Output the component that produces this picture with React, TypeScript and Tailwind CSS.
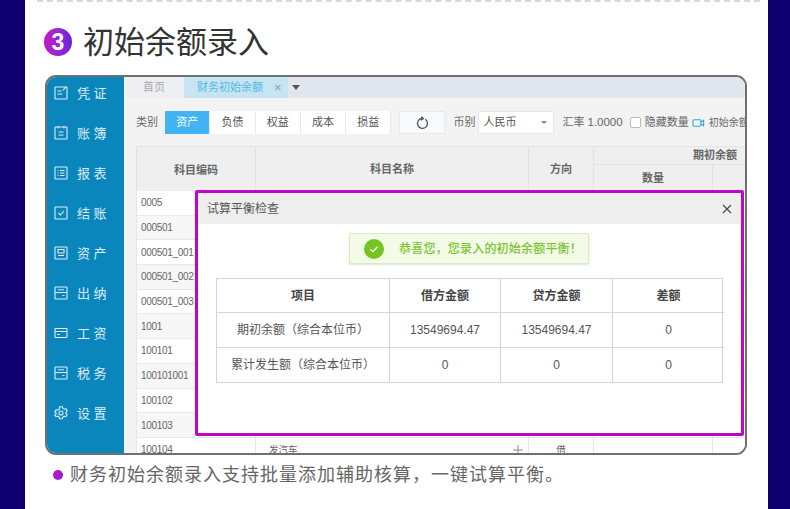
import type { ReactNode } from 'react'

const cjk = "font-['Liberation_Sans','Noto_Sans_CJK_SC',sans-serif]"

function NavIcon({ kind }: { kind: string }) {
  return (
    <svg width="14" height="14" viewBox="0 0 14 14" fill="none" stroke="currentColor" strokeWidth="1.1" className="shrink-0">
      {kind === 'gear' ? (
        <>
          <path d="M5.6 1h2.8l.4 1.7 1.4.8 1.7-.5 1.3 2.3-1.3 1.2v1l1.3 1.2-1.3 2.3-1.7-.5-1.4.8-.4 1.7H5.6l-.4-1.7-1.4-.8-1.7.5L.8 9.500l1.3-1.200v-1L.8 6.300l1.300-2.300 1.700.5 1.400-.8z" transform="translate(0 -.3)" />
          <circle cx="7" cy="7" r="2" />
        </>
      ) : (
        <rect x="1" y={kind === 'card' ? 2.5 : 1} width="12" height={kind === 'card' ? 9 : 12} rx="0.5" />
      )}
      {kind === 'edit' && <path d="M3.500 5h4M3.500 8h5M9 4.500l3-4" />}
      {kind === 'book' && <path d="M4 0v2.500M10 0v2.500M4.500 6h5M4.500 9h5" />}
      {kind === 'list' && <path d="M3.500 4.500h1M6 4.500h4.500M3.500 7h1M6 7h4.500M3.500 9.500h1M6 9.500h4.500" />}
      {kind === 'check' && <path d="M4.500 7l2 2 3.500-4" />}
      {kind === 'asset' && <path d="M4 3.500h6v3.500H4zM4 9.500h6" />}
      {kind === 'cash' && <path d="M1 6.500h12M4 3.800h6M8.500 9.500h2" />}
      {kind === 'card' && <path d="M1 5.500h12M3 8.500h3" />}
    </svg>
  )
}

const navItems = [
  ['edit', '凭 证'],
  ['book', '账 簿'],
  ['list', '报 表'],
  ['check', '结 账'],
  ['asset', '资 产'],
  ['cash', '出 纳'],
  ['card', '工 资'],
  ['cash', '税 务'],
  ['gear', '设 置'],
]

const codes = ['0005', '000501', '000501_001', '000501_002', '000501_003', '1001', '100101', '100101001', '100102', '100103', '100104']

function Seg({ children, active }: { children: ReactNode; active?: boolean }) {
  return (
    <div className={`flex h-[23px] w-[45.300px] shrink-0 items-center justify-center border-r border-[#e8e8e8] text-[11px] ${active ? 'bg-[#41b4f5] text-white' : 'bg-white text-[#555]'}`}>
      {children}
    </div>
  )
}

function Sidebar() {
  return (
    <div className="flex w-[77px] shrink-0 flex-col bg-[#0a86bd] pl-[7px] text-[#dcedf5]">
      {navItems.map(([icon, label], i) => (
        <div key={label} className={`flex h-[40px] shrink-0 items-center gap-[9px] ${i === 0 ? '-mt-[4px]' : ''}`}>
          <NavIcon kind={icon} />
          <span className="text-[13px] leading-none">{label}</span>
        </div>
      ))}
    </div>
  )
}

function Tabs() {
  return (
    <div className="flex h-[21px] bg-[#e2e6ef] text-[11px]">
      <div className="flex w-[60px] items-center justify-center bg-[#edeff3] text-[#aaa]">首页</div>
      <div className="flex w-[104px] items-center bg-[#c6e4f2] pl-[13px] text-[#52b8e8]">
        财务初始余额
        <span className="ml-[11px] text-[13px] leading-none text-[#999]">×</span>
      </div>
      <div className="ml-[4px] mt-[8px] h-0 w-0 border-x-[4px] border-t-[5px] border-x-transparent border-t-[#555]" />
    </div>
  )
}

function Toolbar() {
  return (
    <div className="flex h-[48px] items-center overflow-hidden whitespace-nowrap bg-[#f3f3f3] pl-[12px] pt-[1px] text-[11px] text-[#666]">
      <span className="mr-[7px] shrink-0">类别</span>
      <Seg active>资产</Seg>
      <Seg>负债</Seg>
      <Seg>权益</Seg>
      <Seg>成本</Seg>
      <Seg>损益</Seg>
      <div className="ml-[8px] flex h-[23px] w-[46px] shrink-0 items-center justify-center border border-[#e8e8e8] bg-[#f8fbfd]">
        <svg width="14" height="14" viewBox="0 0 14 14" fill="none" stroke="#555" strokeWidth="1.300">
          <path d="M10.200 3.200A5 5 0 1 1 6.500 2.500" />
          <path d="M6 0v5l3.500-2.500z" fill="#555" stroke="none" />
        </svg>
      </div>
      <span className="ml-[8px] shrink-0">币别</span>
      <div className="ml-[3px] flex h-[23px] w-[76px] shrink-0 items-center justify-between border border-[#e6e6e6] bg-white pl-[4px] pr-[6px] text-[#555]">
        人民币
        <span className="h-0 w-0 border-x-[3px] border-t-[3px] border-x-transparent border-t-[#888]" />
      </div>
      <span className="ml-[8px] shrink-0">汇率</span>
      <span className="ml-[3px] shrink-0 text-[11.500px]">1.0000</span>
      <span className="ml-[7px] h-[11px] w-[11px] shrink-0 rounded-[2px] border border-[#bbb] bg-white" />
      <span className="ml-[4px] shrink-0">隐藏数量</span>
      <svg width="13" height="10" viewBox="0 0 14 10" fill="none" stroke="#3aa8e0" strokeWidth="1.200" className="ml-[3px] shrink-0">
        <rect x="1" y="1.500" width="8.500" height="7" rx="1" />
        <path d="M9.500 4l3-2v6l-3-2" />
      </svg>
      <span className="ml-[4px] shrink-0 text-[10px]">初始余额</span>
    </div>
  )
}

function DataTable() {
  return (
    <div className="bg-[#f3f3f3] pl-[12px] text-[#666]">
      <div className="grid h-[45px] grid-cols-[120px_273px_65px_119px_40px] border-t border-[#e4e4e4] bg-[#efefef] text-[11px] font-bold">
        <div className="flex items-center justify-center border-x border-[#e2e2e2] pt-[2px]">科目编码</div>
        <div className="flex items-center justify-center border-r border-[#e2e2e2]">科目名称</div>
        <div className="flex items-center justify-center border-r border-[#e2e2e2]">方向</div>
        <div className="col-span-2 flex flex-col">
          <div className="flex h-[18px] items-center border-b border-[#e2e2e2] pl-[99px]">期初余额</div>
          <div className="flex flex-1">
            <div className="flex w-[119px] items-center justify-center border-r border-[#e2e2e2]">数量</div>
          </div>
        </div>
      </div>
      {codes.map((code, i) => (
        <div
          key={code}
          className={`grid h-[24.700px] grid-cols-[120px_273px_65px_119px_40px] border-b border-[#e8e8e8] text-[9.500px] ${i % 2 ? 'bg-[#f7f7f7]' : 'bg-white'}`}
        >
          <div className="flex items-center border-x border-[#e6e6e6] pl-[4px] text-[10px] tracking-[-0.300px] text-[#666]">{code}</div>
          <div className="flex items-center justify-between border-r border-[#e6e6e6] pl-[13px] pr-[5px]">
            {code === '100104' && <span>发汽车</span>}
            {code === '100104' && (
              <svg width="10" height="10" viewBox="0 0 10 10" stroke="#888" strokeWidth="1" className="shrink-0"><path d="M5 0v10M0 5h10" /></svg>
            )}
          </div>
          <div className="flex items-center justify-center border-r border-[#e6e6e6]">
            {code === '100104' && '借'}
          </div>
          <div className="border-r border-[#e6e6e6]" />
          <div />
        </div>
      ))}
    </div>
  )
}

const balanceRows = [
  ['项目', '借方金额', '贷方金额', '差额'],
  ['期初余额（综合本位币）', '13549694.47', '13549694.47', '0'],
  ['累计发生额（综合本位币）', '0', '0', '0'],
]

function BalanceDialog() {
  return (
    <div className="absolute left-[148px] top-[113px] h-[246px] w-[549px] rounded-[2px] border-[3px] border-[#bf05c6] bg-white">
      <div className="flex h-[31px] items-center justify-between bg-[#eeeeee] pl-[9px] pr-[9px] text-[12px] text-[#555]">
        试算平衡检查
        <svg width="10" height="10" viewBox="0 0 10 10" stroke="#444" strokeWidth="1.100"><path d="M1 1l8 8M9 1l-8 8" /></svg>
      </div>
      <div className="ml-[151px] mt-[9px] flex h-[31px] w-[240px] items-center rounded-[1px] border border-[#d5efb8] bg-[#f3fbe8] pl-[14px] text-[12px] font-medium tracking-[0.200px] text-[#7ac52e] shadow-[0_1px_2px_rgba(0,0,0,0.12)]">
        <span className="flex h-[20px] w-[20px] items-center justify-center rounded-full bg-[#74c520]">
          <svg width="12" height="12" viewBox="0 0 12 12" fill="none" stroke="#fff" strokeWidth="1.300"><path d="M2.500 6.500l2.500 2.200 4.500-5" /></svg>
        </span>
        <span className="ml-[15px]">恭喜您，您录入的初始余额平衡！</span>
      </div>
      <div className="ml-[18px] mt-[14px] grid w-[507px] grid-cols-[173px_111px_112px_111px] border border-[#d4d4d4] text-[12px] text-[#555]">
        {balanceRows.map((row, r) =>
          row.map((cell, c) => (
            <div
              key={`${r}-${c}`}
              className={`flex h-[34.300px] items-center justify-center ${c < 3 ? 'border-r border-[#d4d4d4]' : ''} ${r < 2 ? 'border-b border-[#d4d4d4]' : ''} ${r === 0 ? 'font-bold text-[#444]' : ''}`}
            >
              {cell}
            </div>
          )),
        )}
      </div>
    </div>
  )
}

export default function App() {
  return (
    <div className={`flex h-[509px] w-[790px] overflow-hidden bg-[#0e006f] ${cjk}`}>
      <main className="ml-[25px] h-full w-[743px] bg-white">
        <div className="ml-[12px] w-[723px] border-t-2 border-dashed border-[#d8d8d8]" />
        <div className="ml-[19px] mt-[20px] flex h-[40px] items-center">
          <span className="flex h-[28px] w-[28px] items-center justify-center rounded-full bg-linear-to-r from-[#c80ac0] to-[#6a1fe0] text-[23px] font-bold leading-none text-white">
            3
          </span>
          <h1 className="ml-[11px] text-[31px] font-normal leading-none text-[#333]">初始余额录入</h1>
        </div>
        <div className="relative ml-[20px] mt-[13px] flex h-[380px] w-[702px] overflow-hidden rounded-[11px] border-2 border-[#707070] bg-white">
          <Sidebar />
          <div className="min-w-0 flex-1">
            <Tabs />
            <Toolbar />
            <DataTable />
          </div>
          <BalanceDialog />
        </div>
        <div className="ml-[28px] mt-[11px] flex items-center text-[18px] leading-none tracking-[1px] text-[#666]">
          <span className="mr-[7px] h-[10px] w-[10px] rounded-full bg-linear-to-r from-[#c80ac0] to-[#8a18d8]" />
          财务初始余额录入支持批量添加辅助核算，一键试算平衡。
        </div>
      </main>
    </div>
  )
}
